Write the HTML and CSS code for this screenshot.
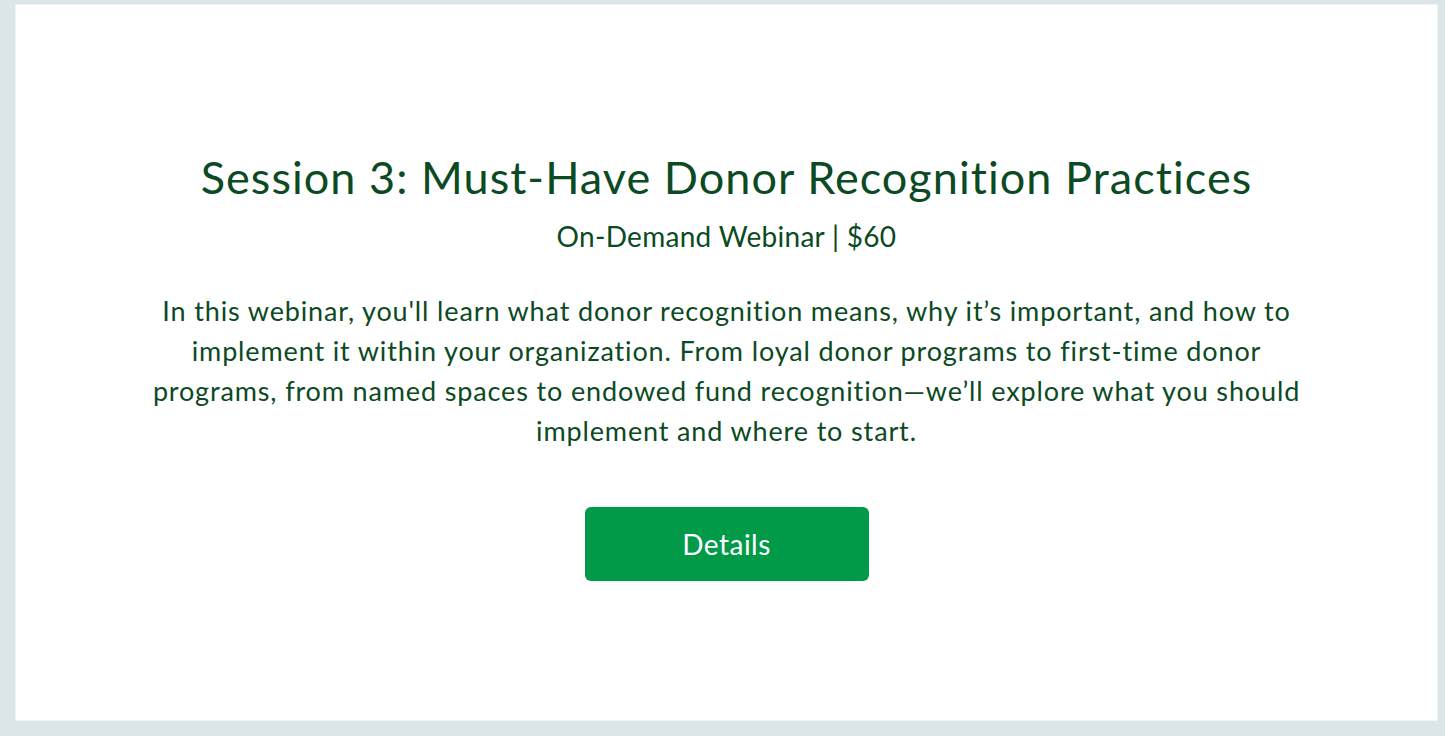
FILE: index.html
```html
<!DOCTYPE html>
<html lang="en">
<head>
    <meta charset="UTF-8">
    <meta name="viewport" content="width=device-width, initial-scale=1.0">
    <title>Session 3: Must-Have Donor Recognition Practices</title>
    <link rel="stylesheet" href="styles.css">
</head>
<body>
    <div class="card">
        <h1>Session 3: Must-Have Donor Recognition Practices</h1>
        <p class="meta">On-Demand Webinar | $60</p>
        <p class="summary">In this webinar, you'll learn what donor recognition means, why it’s important, and how to implement it within your organization. From loyal donor programs to first-time donor programs, from named spaces to endowed fund recognition—we’ll explore what you should implement and where to start.</p>
        <a class="details-btn" href="#">Details</a>
    </div>
</body>
</html>
```

FILE: styles.css
```css
body {
    margin: 0;
    background-color: #dce5e7;
    font-family: Lato, "Open Sans", sans-serif;
    font-variant-ligatures: none;
    color: #0b4a23;
    height: 100vh;
    box-sizing: border-box;
    padding: 4px 7px 15px 15px;
}

.card {
    background-color: white;
    border: 1px solid #eef3f4;
    height: 100%;
    box-sizing: border-box;
    display: flex;
    flex-direction: column;
    align-items: center;
    text-align: center;
    padding: 144px 100px 0;
}

h1 {
    font-size: 45px;
    font-weight: 400;
    letter-spacing: 1.05px;
    margin: 0;
    line-height: 56px;
}

.meta {
    font-size: 28px;
    letter-spacing: 0.3px;
    margin: 14px 0 0;
    line-height: 34px;
}

.summary {
    font-size: 27px;
    letter-spacing: 0.86px;
    line-height: 40px;
    margin: 38px 0 0;
    max-width: 1185px;
}

.dash {
    letter-spacing: 0;
}

.details-btn {
    display: flex;
    align-items: center;
    justify-content: center;
    width: 284px;
    height: 74px;
    margin-top: 56px;
    background-color: #009a49;
    color: white;
    font-size: 28px;
    letter-spacing: 0.5px;
    text-decoration: none;
    border-radius: 6px;
}
```
